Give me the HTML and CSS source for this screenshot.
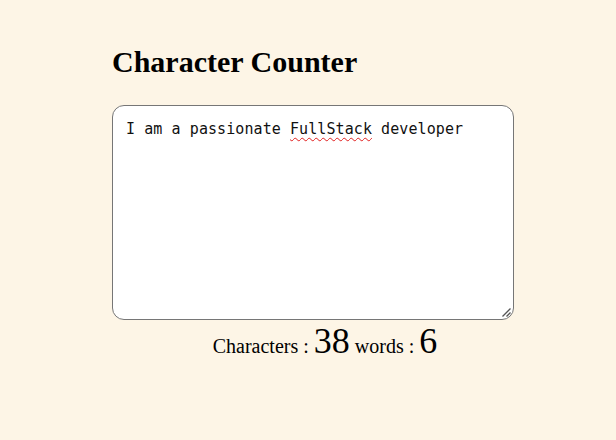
FILE: index.html
```html
<!DOCTYPE html>
<html>
<head>
<meta charset="utf-8">
<link rel="stylesheet" href="styles.css">
</head>
<body>
<main class="app">
  <h1 class="title">Character Counter</h1>
  <div class="box">
    <div class="input">I am a passionate <span class="misspelt">FullStack</span> developer </div>
    <svg class="grip" width="12" height="12" viewBox="0 0 12 12"><path d="M10.5 2.5L2.5 10.5M10.5 6.5L6.5 10.5" stroke="#555" stroke-width="1.3" fill="none"/></svg>
  </div>
  <p class="stats">Characters : <span class="num">38</span> words : <span class="num">6</span></p>
</main>
</body>
</html>
```
FILE: styles.css
```css
html, body { margin: 0; padding: 0; }
body {
  background: #fdf5e6;
  font-family: "Liberation Serif", "Times New Roman", serif;
  color: #000;
  width: 616px;
  height: 440px;
  overflow: hidden;
}
.app {
  width: 402px;
  margin-left: 112px;
  padding-top: 44px;
}
.title {
  font-size: 30px;
  font-weight: bold;
  margin: 0 0 26px 0;
  line-height: 35px;
}
.box {
  position: relative;
  width: 402px;
  height: 215px;
  box-sizing: border-box;
  border: 1px solid #767676;
  border-radius: 12px;
  background: #fff;
}
.input {
  padding: 13px 13px;
  font-family: "DejaVu Sans Mono", "Liberation Mono", monospace;
  font-size: 15px;
  letter-spacing: 0.08px;
  line-height: 20px;
  white-space: pre-wrap;
  color: #111;
}
.misspelt {
  text-decoration: underline wavy #e02020;
  text-decoration-thickness: 1px;
  text-underline-offset: 3px;
}
.grip {
  position: absolute;
  right: 1px;
  bottom: 1px;
}
.stats {
  margin: 0;
  padding-left: 24px;
  text-align: center;
  font-size: 20px;
  line-height: 42px;
}
.num {
  font-size: 36px;
}
```
